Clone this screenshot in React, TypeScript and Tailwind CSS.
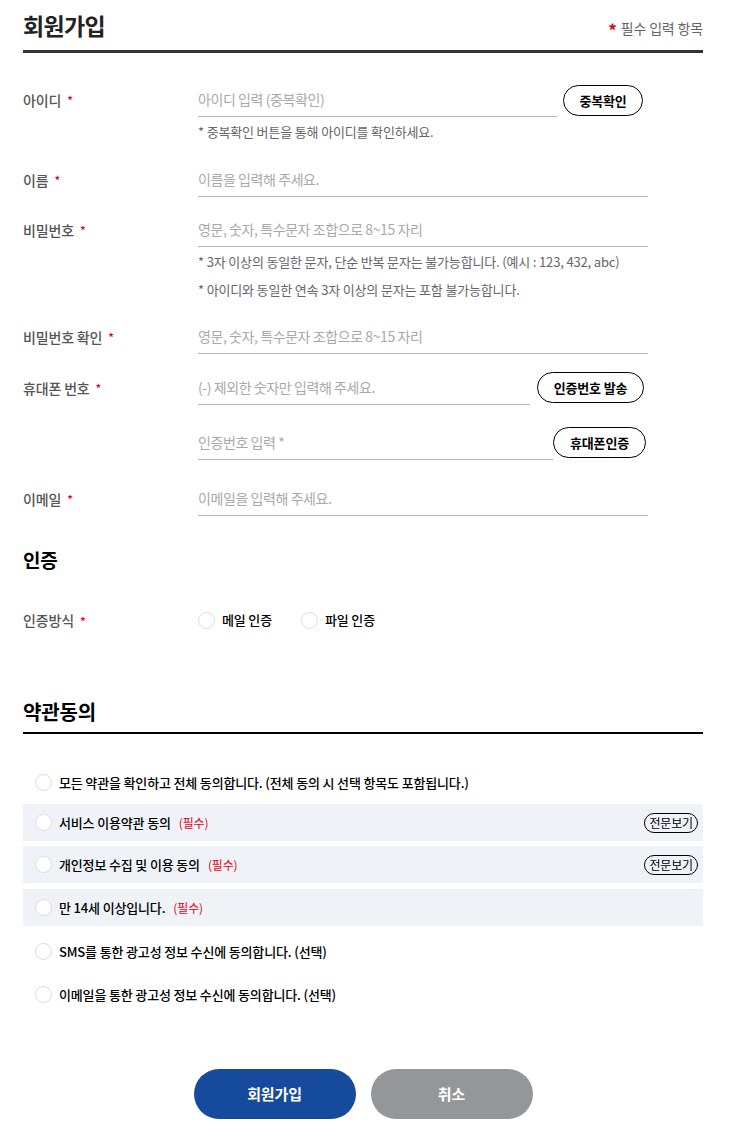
import React from "react";

const font = { fontFamily: '"Noto Sans CJK KR", "Noto Sans", sans-serif' };

function Star() {
  return <span className="ml-[6px] text-[#e60012] text-[12px]">*</span>;
}

function Label({ text }: { text: string }) {
  return (
    <div className="w-[175px] shrink-0 h-[34px] flex items-center text-[14px] font-medium text-[#555]">
      {text}
      <Star />
    </div>
  );
}

function Field({ placeholder, width }: { placeholder: string; width: string }) {
  return (
    <div className={`h-[34px] border-b border-[#b5b5b5] flex items-center text-[14px] tracking-[-0.03em] text-[#a9a9a9] ${width}`}>
      {placeholder}
    </div>
  );
}

function PillButton({ text, w }: { text: string; w: string }) {
  return (
    <button className={`h-[31px] ${w} rounded-full border border-black bg-white text-[13px] font-bold text-black flex items-center justify-center`}>
      {text}
    </button>
  );
}

function Helper({ text }: { text: string }) {
  return <div className="text-[13px] leading-[18px] text-[#666]">* {text}</div>;
}

function Radio({ size = "w-[17px] h-[17px]" }: { size?: string }) {
  return <span className={`${size} rounded-full border border-[#dcdcdc] bg-white shrink-0`} />;
}

function TermRow({
  text,
  req,
  boxed,
  view,
  mt,
}: {
  text: string;
  req?: boolean;
  boxed?: boolean;
  view?: boolean;
  mt: string;
}) {
  return (
    <div className={`${mt} h-[37px] flex items-center pl-[12px] pr-[5px] ${boxed ? "bg-[#eff3f7]" : ""}`}>
      <Radio />
      <span className="ml-[7px] text-[13px] font-medium text-black">{text}</span>
      {req && <span className="ml-[8px] text-[12px] text-[#e60012]">(필수)</span>}
      {view && (
        <span className="ml-auto h-[20px] px-[4px] rounded-full border border-black text-[12px] text-black flex items-center">
          전문보기
        </span>
      )}
    </div>
  );
}

export default function App() {
  return (
    <div style={font} className="w-[729px] bg-white tracking-[-0.01em]">
      <div className="mx-[23px] w-[680px] pb-[22px]">
        {/* Header */}
        <div className="h-[50px] flex items-center justify-between pt-[4px]">
          <h1 className="text-[23px] font-bold text-[#222] leading-none -mt-[4px] tracking-[-0.03em]">회원가입</h1>
          <div className="text-[14px] text-[#666] mt-[2px] flex items-center">
            <span className="text-[#e60012] mr-[4px] text-[17px] font-bold leading-none mt-[3px]">*</span>필수 입력 항목
          </div>
        </div>
        <div className="h-[3px] bg-[#333]" />

        {/* 아이디 */}
        <div className="mt-[30px] flex">
          <Label text="아이디" />
          <div className="flex flex-col">
            <div className="flex items-start">
              <Field placeholder="아이디 입력 (중복확인)" width="w-[359px]" />
              <div className="ml-[6px] mt-[2px]">
                <PillButton text="중복확인" w="w-[80px]" />
              </div>
            </div>
            <div className="mt-[6px]">
              <Helper text="중복확인 버튼을 통해 아이디를 확인하세요." />
            </div>
          </div>
        </div>

        {/* 이름 */}
        <div className="mt-[22px] flex">
          <Label text="이름" />
          <Field placeholder="이름을 입력해 주세요." width="w-[450px]" />
        </div>

        {/* 비밀번호 */}
        <div className="mt-[16px] flex">
          <Label text="비밀번호" />
          <div className="flex flex-col">
            <Field placeholder="영문, 숫자, 특수문자 조합으로 8~15 자리" width="w-[450px]" />
            <div className="mt-[6px] flex flex-col gap-[10px]">
              <Helper text="3자 이상의 동일한 문자, 단순 반복 문자는 불가능합니다. (예시 : 123, 432, abc)" />
              <Helper text="아이디와 동일한 연속 3자 이상의 문자는 포함 불가능합니다." />
            </div>
          </div>
        </div>

        {/* 비밀번호 확인 */}
        <div className="mt-[21px] flex">
          <Label text="비밀번호 확인" />
          <Field placeholder="영문, 숫자, 특수문자 조합으로 8~15 자리" width="w-[450px]" />
        </div>

        {/* 휴대폰 번호 */}
        <div className="mt-[17px] flex">
          <Label text="휴대폰 번호" />
          <div className="flex items-start">
            <Field placeholder="(-) 제외한 숫자만 입력해 주세요." width="w-[332px]" />
            <div className="ml-[7px] mt-[1px]">
              <PillButton text="인증번호 발송" w="w-[107px]" />
            </div>
          </div>
        </div>

        {/* 인증번호 */}
        <div className="mt-[21px] flex">
          <div className="w-[175px] shrink-0" />
          <div className="flex items-start">
            <Field placeholder="인증번호 입력 *" width="w-[355px]" />
            <div className="ml-0 mt-[1px]">
              <PillButton text="휴대폰인증" w="w-[93px]" />
            </div>
          </div>
        </div>

        {/* 이메일 */}
        <div className="mt-[22px] flex">
          <Label text="이메일" />
          <Field placeholder="이메일을 입력해 주세요." width="w-[450px]" />
        </div>

        {/* 인증 */}
        <h2 className="mt-[30px] h-[28px] flex items-center text-[19px] font-bold text-black">인증</h2>

        <div className="mt-[36px] flex items-center h-[20px]">
          <div className="w-[175px] shrink-0 text-[14px] font-medium text-[#555]">
            인증방식
            <Star />
          </div>
          <label className="flex items-center">
            <Radio size="w-[17px] h-[17px]" />
            <span className="ml-[7px] text-[13px] font-medium text-black">메일 인증</span>
          </label>
          <label className="flex items-center ml-[29px]">
            <Radio size="w-[17px] h-[17px]" />
            <span className="ml-[7px] text-[13px] font-medium text-black">파일 인증</span>
          </label>
        </div>

        {/* 약관동의 */}
        <h2 className="mt-[67px] h-[30px] flex items-center text-[20px] font-bold text-black">약관동의</h2>
        <div className="mt-[5px] h-[2px] bg-black" />

        <div className="flex flex-col">
          <TermRow mt="mt-[30px]" text="모든 약관을 확인하고 전체 동의합니다. (전체 동의 시 선택 항목도 포함됩니다.)" />
          <TermRow mt="mt-[3px]" boxed req view text="서비스 이용약관 동의" />
          <TermRow mt="mt-[5px]" boxed req view text="개인정보 수집 및 이용 동의" />
          <TermRow mt="mt-[6px]" boxed req text="만 14세 이상입니다." />
          <TermRow mt="mt-[7px]" text="SMS를 통한 광고성 정보 수신에 동의합니다. (선택)" />
          <TermRow mt="mt-[6px]" text="이메일을 통한 광고성 정보 수신에 동의합니다. (선택)" />
        </div>

        {/* Buttons */}
        <div className="mt-[56px] flex justify-center gap-[15px]">
          <button className="w-[162px] h-[50px] rounded-full bg-[#154a9c] text-white text-[15px] font-bold">
            회원가입
          </button>
          <button className="w-[162px] h-[50px] rounded-full bg-[#94979a] text-white text-[15px] font-bold">
            취소
          </button>
        </div>
      </div>
    </div>
  );
}
